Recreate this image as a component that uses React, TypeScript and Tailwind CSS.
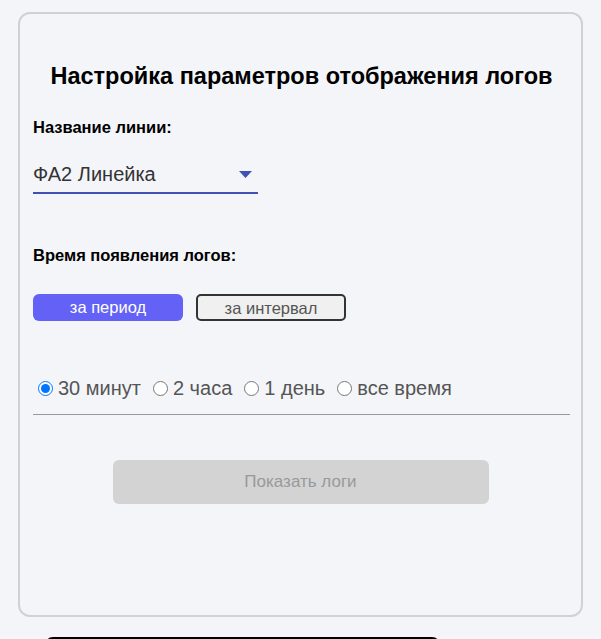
import { useState } from 'react';

const PERIODS = ['30 минут', '2 часа', '1 день', 'все время'];

export default function App() {
  const [period, setPeriod] = useState(PERIODS[0]);

  return (
    <div className="min-h-[639px] bg-[#f4f5f9] font-['Liberation_Sans',Arial,sans-serif] text-black">
      <div className="pt-3 px-[18px]">
        <div className="h-[605px] rounded-xl border-2 border-[#d0d1d5] pl-[13px] pr-[11px]">
          <h1 className="pt-[48px] text-center text-[23.5px] font-bold leading-[28px]">
            Настройка параметров отображения логов
          </h1>

          <div className="mt-[27px] text-[16.5px] font-bold leading-[20px]">Название линии:</div>

          <div className="mt-[25px] flex w-[225px] items-center justify-between border-b-2 border-[#3f51b5] pb-[6px]">
            <span className="text-[20px] leading-[24px] text-[#333]">ФА2 Линейка</span>
            <svg width="13" height="7" viewBox="0 0 13 7" className="mr-[6px]">
              <path d="M0 0h13L6.5 7z" fill="#3f51b5" />
            </svg>
          </div>

          <div className="mt-[51px] text-[16.5px] font-bold leading-[20px]">Время появления логов:</div>

          <div className="mt-[29px] flex gap-[13px]">
            <button className="h-[27px] w-[150px] rounded-md bg-[#6462f6] text-[16.5px] text-white">
              за период
            </button>
            <button className="h-[27px] w-[150px] rounded-[5px] border-2 border-[#333] bg-[#f0f0f0] text-[16.5px] text-[#555]">
              за интервал
            </button>
          </div>

          <div className="mt-[55px] flex items-center border-b border-[#999] pb-[14px] pl-[5px] text-[20px] leading-[24px] text-[#555]">
            {PERIODS.map((p) => (
              <label key={p} className="mr-[12px] flex cursor-pointer items-center">
                <input
                  type="radio"
                  name="period"
                  checked={period === p}
                  onChange={() => setPeriod(p)}
                  className="m-0 mr-[5px] h-[15px] w-[15px] accent-[#0075ff]"
                />
                {p}
              </label>
            ))}
          </div>

          <div className="mt-[45px] flex justify-center pr-[2px]">
            <button
              disabled
              className="h-[44px] w-[376px] rounded-md bg-[#d3d3d3] text-[17px] text-[#999]"
            >
              Показать логи
            </button>
          </div>
        </div>
      </div>
      <div className="ml-[45px] mt-[20px] h-[20px] w-[395px] rounded-t-lg bg-black" />
    </div>
  );
}
